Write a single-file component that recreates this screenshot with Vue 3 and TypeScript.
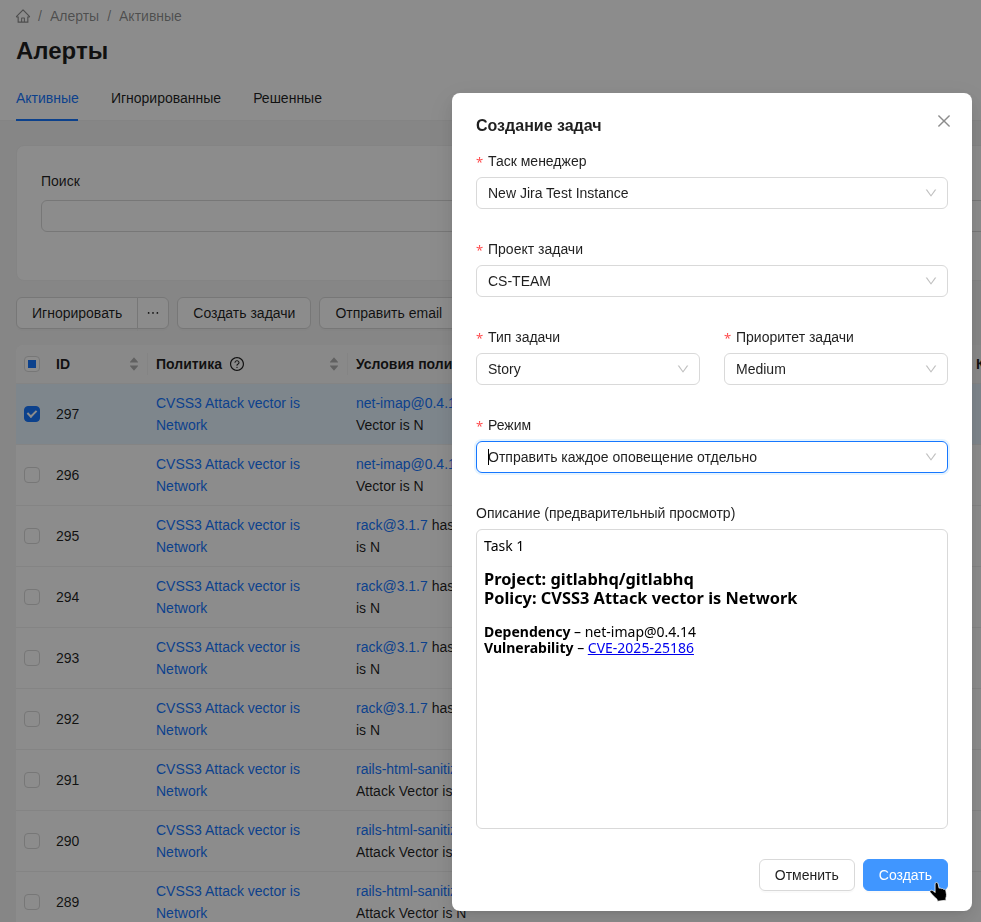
<script setup lang="ts">
import { ref } from 'vue'

interface AlertRow {
  id: number
  link: string
  rest: string
  second: string
}

interface SelectField {
  label: string
  value: string
  half?: boolean
  focused?: boolean
}

const imap = { link: 'net-imap@0.4.14', rest: ' has Attack', second: 'Vector is N' }
const rack = { link: 'rack@3.1.7', rest: ' has Attack Vector', second: 'is N' }
const rails = { link: 'rails-html-sanitizer@1.6.0', rest: ' has', second: 'Attack Vector is N' }

const rows: AlertRow[] = [
  { id: 297, ...imap },
  { id: 296, ...imap },
  { id: 295, ...rack },
  { id: 294, ...rack },
  { id: 293, ...rack },
  { id: 292, ...rack },
  { id: 291, ...rails },
  { id: 290, ...rails },
  { id: 289, ...rails },
]

const fields: SelectField[] = [
  { label: 'Таск менеджер', value: 'New Jira Test Instance' },
  { label: 'Проект задачи', value: 'CS-TEAM' },
  { label: 'Тип задачи', value: 'Story', half: true },
  { label: 'Приоритет задачи', value: 'Medium', half: true },
  { label: 'Режим', value: 'Отправить каждое оповещение отдельно', focused: true },
]

const tabs = ['Активные', 'Игнорированные', 'Решенные']
const activeTab = ref('Активные')
const selected = ref<number[]>([297])

const homePath =
  'M946.5 505L560.1 118.8l-25.9-25.9a31.5 31.5 0 00-44.4 0L77.5 505a63.9 63.9 0 00-18.8 46c.4 35.2 29.7 63.3 64.9 63.3h42.5V940h691.8V614.3h43.4c17.1 0 33.2-6.7 45.3-18.8a63.6 63.6 0 0018.7-45.3c0-17-6.7-33.1-18.8-45.2zM568 868H456V664h112v204zm217.9-325.7V868H632V640c0-22.1-17.9-40-40-40H432c-22.1 0-40 17.9-40 40v228H238.1V542.3h-96l370-369.7 23.1 23.1L882 542.3h-96.1z'
const downPath =
  'M884 256h-75c-5.1 0-9.9 2.5-12.9 6.6L512 654.2 227.9 262.6c-3-4.1-7.8-6.6-12.9-6.6h-75c-6.5 0-10.3 7.4-6.5 12.7l352.6 486.1c12.8 17.6 39 17.6 51.7 0l352.6-486.1c3.9-5.3.1-12.7-6.4-12.7z'
const caretUpPath =
  'M858.9 689L530.5 308.2c-9.4-10.9-27.5-10.9-37 0L165.1 689c-12.2 14.2-1.2 35 18.5 35h656.8c19.7 0 30.7-20.8 18.5-35z'
const caretDownPath =
  'M840.4 300H183.6c-19.7 0-30.7 20.8-18.5 35l328.4 380.8c9.4 10.9 27.5 10.9 37 0L858.9 335c12.2-14.2 1.2-35-18.5-35z'
const closePath =
  'M799.86 166.31l57.83 57.9L569.93 512l287.76 287.79-57.83 57.9L512 569.93 224.21 857.69l-57.9-57.83L454.07 512 166.31 224.21l57.83-57.9L512 454.07z'
</script>

<template>
  <div class="page">
    <header class="top">
      <nav class="crumbs">
        <svg class="home" viewBox="0 0 1024 1024"><path :d="homePath" /></svg>
        <span>/</span>
        <span>Алерты</span>
        <span>/</span>
        <span>Активные</span>
      </nav>
      <h1>Алерты</h1>
      <div class="tabs">
        <div
          v-for="tab in tabs"
          :key="tab"
          class="tab"
          :class="{ active: tab === activeTab }"
          @click="activeTab = tab"
        >{{ tab }}</div>
      </div>
    </header>

    <main class="content">
      <section class="card">
        <label>Поиск</label>
        <div class="search"></div>
      </section>

      <div class="toolbar">
        <div class="group">
          <button class="btn first">Игнорировать</button>
          <button class="btn dots">
            <svg viewBox="0 0 1024 1024"><path d="M176 511a56 56 0 10112 0 56 56 0 10-112 0zm280 0a56 56 0 10112 0 56 56 0 10-112 0zm280 0a56 56 0 10112 0 56 56 0 10-112 0z" /></svg>
          </button>
        </div>
        <button class="btn">Создать задачи</button>
        <button class="btn">Отправить email</button>
      </div>

      <div class="table">
        <div class="row head">
          <div class="cell check"><span class="box partial"></span></div>
          <div class="cell sep">
            <span>ID</span>
            <span class="sorter">
              <svg viewBox="0 0 1024 1024"><path :d="caretUpPath" /></svg>
              <svg viewBox="0 0 1024 1024"><path :d="caretDownPath" /></svg>
            </span>
          </div>
          <div class="cell sep">
            <span class="policy">
              Политика
              <svg class="help" viewBox="0 0 1024 1024">
                <path d="M512 64C264.6 64 64 264.6 64 512s200.6 448 448 448 448-200.6 448-448S759.4 64 512 64zm0 820c-205.4 0-372-166.6-372-372s166.6-372 372-372 372 166.6 372 372-166.6 372-372 372z" />
                <path d="M623.6 316.7C593.6 290.4 554 276 512 276s-81.6 14.5-111.6 40.7C369.2 344 352 380.7 352 420v7.6c0 4.4 3.6 8 8 8h48c4.4 0 8-3.6 8-8V420c0-44.1 43.1-80 96-80s96 35.9 96 80c0 31.1-22 59.6-56.1 72.7-21.2 8.1-39.2 22.3-52.1 40.9-13.1 19-19.9 41.8-19.9 64.9V620c0 4.4 3.6 8 8 8h48c4.4 0 8-3.6 8-8v-22.7a48.3 48.3 0 0130.9-44.8c59-22.7 97.1-74.7 97.1-132.5.1-39.3-17.1-76-48.3-103.3zM472 732a40 40 0 1080 0 40 40 0 10-80 0z" />
              </svg>
            </span>
            <span class="sorter">
              <svg viewBox="0 0 1024 1024"><path :d="caretUpPath" /></svg>
              <svg viewBox="0 0 1024 1024"><path :d="caretDownPath" /></svg>
            </span>
          </div>
          <div class="cell">Условия политики</div>
          <div class="cell">Критичность</div>
        </div>
        <div v-for="row in rows" :key="row.id" class="row" :class="{ picked: selected.includes(row.id) }">
          <div class="cell check">
            <span class="box" :class="{ on: selected.includes(row.id) }"></span>
          </div>
          <div class="cell">{{ row.id }}</div>
          <div class="cell"><a>CVSS3 Attack vector is Network</a></div>
          <div class="cell"><p><a>{{ row.link }}</a>{{ row.rest }}<br />{{ row.second }}</p></div>
          <div class="cell"></div>
        </div>
      </div>
    </main>

    <div class="mask">
      <section class="modal">
        <div class="title">
          <h2>Создание задач</h2>
          <svg class="close" viewBox="0 0 1024 1024"><path :d="closePath" /></svg>
        </div>
        <div class="form">
          <div v-for="f in fields" :key="f.label" class="field" :class="{ half: f.half }">
            <div class="label"><i>*</i>{{ f.label }}</div>
            <div class="select" :class="{ focused: f.focused }">
              <span class="value">{{ f.value }}</span>
              <svg viewBox="0 0 1024 1024"><path :d="downPath" /></svg>
            </div>
          </div>
          <div class="field">
            <div class="label">Описание (предварительный просмотр)</div>
            <div class="preview">
              <p>Task 1</p>
              <h3>Project: gitlabhq/gitlabhq<br />Policy: CVSS3 Attack vector is Network</h3>
              <p>
                <b>Dependency</b> – net-imap@0.4.14<br />
                <b>Vulnerability</b> – <u>CVE-2025-25186</u>
              </p>
            </div>
          </div>
        </div>
        <div class="footer">
          <button class="btn">Отменить</button>
          <button class="btn primary">
            Создать
            <svg class="pointer" viewBox="0 0 20 24">
              <path d="M6.3 2.1c0-1 .6-1.6 1.5-1.6s1.6.7 1.8 1.6l1 4.8c.4-.5 2-.5 2.5.5.6-.6 2.1-.4 2.5.7.9-.4 2.2.1 2.4 1.3l.7 4.4c.2 1.5-.4 2.5-.7 3.8l.3 2.2-9.4 1.2-.7-2.4c-1.8-1.2-3.5-3-4.9-4.6L.9 11.2c-.7-1.1.1-2.3 1.3-2.2 1.6.2 3 1.3 4.1 2.500z" />
            </svg>
          </button>
        </div>
      </section>
    </div>
  </div>
</template>

<style>
body {
  margin: 0;
  overflow: hidden;
}
</style>

<style scoped>
* {
  box-sizing: border-box;
}
.page {
  width: 981px;
  height: 922px;
  overflow: hidden;
  background: #f5f5f5;
  color: rgba(0, 0, 0, 0.88);
  font: 14px/22px 'Liberation Sans', Arial, sans-serif;
}
h1, h2, h3, p {
  margin: 0;
}
.top {
  height: 121px;
  padding: 5px 16px 0;
  background: #fff;
  border-bottom: 1px solid #f0f0f0;
}
.crumbs {
  display: flex;
  align-items: center;
  gap: 8px;
  height: 22px;
  color: rgba(0, 0, 0, 0.45);
}
.home {
  width: 16px;
  height: 16px;
  margin: 0 -1px;
  fill: currentColor;
}
h1 {
  margin-top: 8px;
  font-size: 24px;
  line-height: 32px;
  font-weight: 700;
}
.tabs {
  display: flex;
  gap: 32px;
  margin-top: 8px;
}
.tab {
  height: 46px;
  padding-top: 12px;
}
.tab.active {
  color: #1677ff;
  background: linear-gradient(#1677ff, #1677ff) left bottom / 62px 2px no-repeat;
}
.content {
  width: 1300px;
  padding: 24px 16px 0;
}
.card {
  height: 136px;
  padding: 24px 24px 0;
  background: #fff;
  border: 1px solid #f0f0f0;
  border-radius: 8px;
}
.card label {
  display: block;
}
.search {
  height: 32px;
  margin-top: 8px;
  border: 1px solid #d9d9d9;
  border-radius: 6px;
}
.toolbar {
  display: flex;
  gap: 8px;
  margin-top: 16px;
}
.group {
  display: flex;
}
.btn {
  display: inline-flex;
  align-items: center;
  justify-content: center;
  height: 32px;
  padding: 0 15px;
  border: 1px solid #d9d9d9;
  border-radius: 6px;
  background: #fff;
  box-shadow: 0 2px 0 rgba(0, 0, 0, 0.02);
  color: rgba(0, 0, 0, 0.88);
  font: inherit;
  white-space: nowrap;
}
.btn.first {
  border-radius: 6px 0 0 6px;
}
.btn.dots {
  width: 32px;
  margin-left: -1px;
  padding: 0;
  border-radius: 0 6px 6px 0;
}
.dots svg {
  width: 16px;
  height: 16px;
  fill: currentColor;
}
.table {
  margin-top: 16px;
  background: #fff;
  border-radius: 8px 8px 0 0;
  overflow: hidden;
}
.row {
  display: grid;
  grid-template-columns: 32px 100px 200px 620px 1fr;
  height: 61px;
  border-bottom: 1px solid #f0f0f0;
}
.row.head {
  height: 39px;
  background: #fafafa;
  font-weight: 700;
}
.row.picked {
  background: #e6f4ff;
}
.cell {
  display: flex;
  align-items: center;
  padding: 0 8px;
}
.cell.sep {
  justify-content: space-between;
  background: linear-gradient(#f0f0f0, #f0f0f0) right center / 1px 22px no-repeat;
}
a {
  color: #1677ff;
}
.policy {
  display: flex;
  align-items: center;
  gap: 7px;
}
.help {
  width: 16px;
  height: 16px;
  fill: currentColor;
}
.sorter {
  display: flex;
  flex-direction: column;
  color: rgba(0, 0, 0, 0.29);
}
.sorter svg {
  width: 12px;
  height: 12px;
  fill: currentColor;
}
.sorter svg + svg {
  margin-top: -4px;
}
.box {
  display: flex;
  align-items: center;
  justify-content: center;
  width: 16px;
  height: 16px;
  border: 1px solid #d9d9d9;
  border-radius: 4px;
  background: #fff;
}
.box.partial::after {
  content: '';
  width: 8px;
  height: 8px;
  background: #1677ff;
}
.box.on {
  background: #1677ff;
  border-color: #1677ff;
}
.box.on::after {
  content: '';
  box-sizing: border-box;
  width: 5.7px;
  height: 9.1px;
  border: solid #fff;
  border-width: 0 2px 2px 0;
  transform: translateY(-1px) rotate(45deg);
}
.mask {
  position: fixed;
  inset: 0;
  display: flex;
  justify-content: flex-end;
  align-items: flex-start;
  padding: 93px 9px 0 0;
  background: rgba(0, 0, 0, 0.45);
}
.modal {
  width: 520px;
  height: 818px;
  padding: 20px 24px;
  background: #fff;
  border-radius: 8px;
  box-shadow: 0 6px 16px 0 rgba(0, 0, 0, 0.08), 0 3px 6px -4px rgba(0, 0, 0, 0.12), 0 9px 28px 8px rgba(0, 0, 0, 0.05);
}
.title {
  display: flex;
  justify-content: space-between;
  align-items: flex-start;
  height: 24px;
}
h2 {
  padding-top: 1px;
  font-size: 16px;
  line-height: 24px;
  font-weight: 700;
}
.close {
  width: 18px;
  height: 18px;
  margin: -1px -5px 0 0;
  fill: rgba(0, 0, 0, 0.45);
}
.form {
  display: grid;
  grid-template-columns: 1fr 1fr;
  gap: 29px 24px;
  margin-top: 13px;
}
.field {
  grid-column: span 2;
}
.field.half {
  grid-column: span 1;
}
.label {
  display: flex;
  height: 22px;
  margin-bottom: 5px;
}
.label i {
  width: 12px;
  padding-top: 1px;
  color: #ff4d4f;
  font-family: 'Noto Sans', sans-serif;
  font-size: 13px;
  font-style: normal;
}
.select {
  display: flex;
  align-items: center;
  justify-content: space-between;
  height: 32px;
  padding: 0 9px 0 11px;
  border: 1px solid #d9d9d9;
  border-radius: 6px;
}
.select svg {
  width: 14px;
  height: 14px;
  fill: rgba(0, 0, 0, 0.25);
}
.select.focused {
  border-color: #1677ff;
  box-shadow: 0 0 0 2px rgba(5, 145, 255, 0.1);
}
.focused .value {
  height: 16px;
  border-left: 1px solid #000;
  line-height: 16px;
  text-indent: -1px;
}
.preview {
  height: 300px;
  padding: 8px 7px;
  border: 1px solid #d9d9d9;
  border-radius: 6px;
  color: #000;
  font: 14px/16px 'Noto Sans', sans-serif;
}
.preview h3 {
  margin: 16px 0;
  font-size: 1.17em;
  line-height: 19px;
  font-weight: 700;
}
.preview u {
  color: #0000ee;
}
.footer {
  display: flex;
  justify-content: flex-end;
  gap: 8px;
  margin-top: 30px;
}
.btn.primary {
  position: relative;
  border-color: #4096ff;
  background: #4096ff;
  color: #fff;
}
.pointer {
  position: absolute;
  left: 65px;
  top: 22px;
  width: 19px;
  height: 22px;
  fill: #000;
  stroke: #fff;
  stroke-width: 0.8;
}
</style>
